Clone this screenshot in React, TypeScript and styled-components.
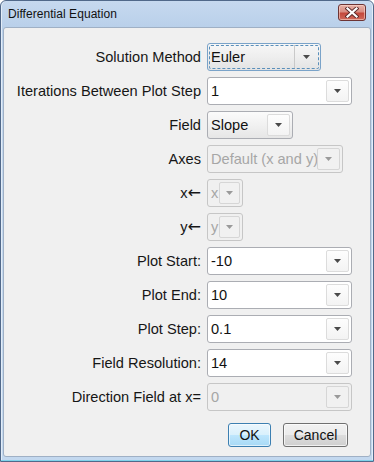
import React from 'react';
import styled, { createGlobalStyle, css } from 'styled-components';

const Global = createGlobalStyle`
  html, body { margin: 0; padding: 0; }
  body {
    width: 374px;
    height: 462px;
    overflow: hidden;
    font-family: "Liberation Sans", Arial, sans-serif;
    background: #ffffff;
  }
`;

const Window = styled.div`
  box-sizing: border-box;
  width: 374px;
  height: 462px;
  display: flex;
  flex-direction: column;
  border: 1px solid #51698a;
  border-radius: 6px 6px 0 0;
  background: linear-gradient(#c6d9ef, #b9d0ea 26px, #c1d6ee 60px, #c3d8ef);
  padding: 0 2px 4px;
  box-shadow: inset 0 -1px 0 #7fd3ea, inset 1px 0 0 #e3edf8, inset -1px 0 0 #e3edf8;
`;

const TitleBar = styled.div`
  height: 26px;
  display: flex;
  align-items: flex-start;
  justify-content: space-between;
  padding-left: 5px;
`;

const Title = styled.span`
  margin-top: 6px;
  font-size: 12px;
  color: #111;
  letter-spacing: 0.05px;
`;

const CloseButton = styled.div`
  box-sizing: border-box;
  width: 28px;
  height: 17px;
  margin-top: 3px;
  margin-right: 5px;
  border: 1px solid #6d3434;
  border-radius: 3px;
  background: linear-gradient(#e7b1a8, #d98d82 45%, #c4483b 55%, #cf6a5c);
  box-shadow: inset 0 0 0 1px rgba(255, 220, 210, 0.55);
  display: flex;
  align-items: center;
  justify-content: center;
`;

const Panel = styled.div`
  flex: 1;
  box-sizing: border-box;
  border: 1px solid #9fb0c5;
  border-radius: 3px;
  background: #f0f0f0;
  display: flex;
  flex-direction: column;
  padding-top: 15px;
`;

const Form = styled.div`
  display: grid;
  grid-template-columns: 197px 1fr;
  grid-auto-rows: 28px;
  column-gap: 6px;
  row-gap: 6px;
`;

const Label = styled.div`
  justify-self: end;
  align-self: center;
  display: flex;
  align-items: center;
  font-size: 14.6px;
  color: #161616;
  white-space: nowrap;
`;

const LeftArrow = styled.span`
  font-family: "DejaVu Sans", sans-serif;
  font-size: 16px;
  line-height: 1;
  margin-left: 0;
`;

type ComboKind = 'edit' | 'list' | 'focus';

const Combo = styled.div<{ $w: number; $kind: ComboKind; $disabled?: boolean }>`
  position: relative;
  box-sizing: border-box;
  width: ${(p) => p.$w}px;
  height: 28px;
  display: flex;
  align-items: center;
  border: 1px solid #abadb3;
  border-radius: 3px;
  background: #ffffff;
  padding: 2px;
  ${(p) =>
    p.$kind !== 'edit' &&
    css`
      background: linear-gradient(#fbfbfb, #f1f1f1 50%, #e6e6e6);
    `}
  ${(p) =>
    p.$kind === 'focus' &&
    css`
      border-color: #7aa3c9;
      background: linear-gradient(#f7f7f7, #eeeeee 50%, #e3e3e3);
      &::after {
        content: '';
        position: absolute;
        inset: 1px;
        border: 1px dashed #5a8fba;
        border-radius: 2px;
        pointer-events: none;
      }
    `}
  ${(p) =>
    p.$disabled &&
    css`
      border-color: #c6c6c6;
      background: #f0f0f0;
    `}
`;

const Value = styled.span<{ $disabled?: boolean }>`
  flex: 1;
  min-width: 0;
  padding-left: 1px;
  font-size: 14.6px;
  color: ${(p) => (p.$disabled ? '#a6a6a6' : '#111')};
  white-space: nowrap;
  overflow: visible;
`;

const ArrowBox = styled.div<{ $kind: ComboKind; $disabled?: boolean; $compact?: boolean }>`
  box-sizing: border-box;
  flex-shrink: 0;
  width: ${(p) => (p.$compact ? 21 : 23)}px;
  height: 22px;
  display: flex;
  align-items: center;
  justify-content: center;
  border: 1px solid #dcdcdc;
  border-radius: 2px;
  background: linear-gradient(#fdfdfd, #f3f3f3);
  ${(p) =>
    p.$kind === 'focus' &&
    css`
      border: none;
      border-left: 1px solid #c9c9c9;
      border-radius: 0;
      height: 24px;
      width: 24px;
      background: transparent;
    `}
  ${(p) =>
    p.$disabled &&
    css`
      border-color: #d6d6d6;
      background: #f1f1f1;
    `}
`;

const ButtonRow = styled.div`
  display: flex;
  justify-content: flex-end;
  gap: 12px;
  margin-top: 12px;
  padding-right: 22px;
`;

const Button = styled.div<{ $w: number; $default?: boolean }>`
  box-sizing: border-box;
  width: ${(p) => p.$w}px;
  height: 24px;
  display: flex;
  align-items: center;
  justify-content: center;
  border: 1px solid #707070;
  border-radius: 3px;
  font-size: 14px;
  color: #111;
  background: linear-gradient(#f2f2f2, #ebebeb 50%, #dddddd 50%, #cfcfcf);
  box-shadow: inset 0 0 0 1px rgba(255, 255, 255, 0.7);
  ${(p) =>
    p.$default &&
    css`
      border-color: #3c7fb1;
      background: linear-gradient(#eaf6fd, #d9f0fc 50%, #bee6fd 50%, #a7d9f5);
      box-shadow: inset 0 0 0 1px rgba(255, 255, 255, 0.6);
    `}
`;

const Arrow = ({ disabled }: { disabled?: boolean }) => (
  <svg width="7" height="4" viewBox="0 0 7 4">
    <polygon points="0,0 7,0 3.5,4" fill={disabled ? '#9a9a9a' : '#4a4a4a'} />
  </svg>
);

type Row = {
  label: string;
  arrow?: boolean;
  value: string;
  w: number;
  kind: ComboKind;
  disabled?: boolean;
};

const rows: Row[] = [
  { label: 'Solution Method', value: 'Euler', w: 114, kind: 'focus' },
  { label: 'Iterations Between Plot Step', value: '1', w: 145, kind: 'edit' },
  { label: 'Field', value: 'Slope', w: 86, kind: 'list' },
  { label: 'Axes', value: 'Default (x and y)', w: 136, kind: 'list', disabled: true },
  { label: 'x', arrow: true, value: 'x', w: 36, kind: 'list', disabled: true },
  { label: 'y', arrow: true, value: 'y', w: 36, kind: 'list', disabled: true },
  { label: 'Plot Start:', value: '-10', w: 145, kind: 'edit' },
  { label: 'Plot End:', value: '10', w: 145, kind: 'edit' },
  { label: 'Plot Step:', value: '0.1', w: 145, kind: 'edit' },
  { label: 'Field Resolution:', value: '14', w: 145, kind: 'edit' },
  { label: 'Direction Field at x=', value: '0', w: 145, kind: 'edit', disabled: true },
];

export default function App() {
  return (
    <>
      <Global />
      <Window>
        <TitleBar>
          <Title>Differential Equation</Title>
          <CloseButton>
            <svg width="14" height="11" viewBox="0 0 14 11">
              <path d="M2.5 1.5 L11.5 9.5 M11.5 1.5 L2.5 9.5" stroke="#5a2a2a" strokeWidth="4" strokeLinecap="square" />
              <path d="M2.5 1.5 L11.5 9.5 M11.5 1.5 L2.5 9.5" stroke="#ffffff" strokeWidth="2.2" strokeLinecap="square" />
            </svg>
          </CloseButton>
        </TitleBar>
        <Panel>
          <Form>
            {rows.map((r) => (
              <React.Fragment key={r.label}>
                <Label>
                  {r.label}
                  {r.arrow && <LeftArrow>←</LeftArrow>}
                </Label>
                <Combo $w={r.w} $kind={r.kind} $disabled={r.disabled}>
                  <Value $disabled={r.disabled}>{r.value}</Value>
                  <ArrowBox $kind={r.kind} $disabled={r.disabled} $compact={r.w < 50}>
                    <Arrow disabled={r.disabled} />
                  </ArrowBox>
                </Combo>
              </React.Fragment>
            ))}
          </Form>
          <ButtonRow>
            <Button $w={43} $default>OK</Button>
            <Button $w={65}>Cancel</Button>
          </ButtonRow>
        </Panel>
      </Window>
    </>
  );
}
